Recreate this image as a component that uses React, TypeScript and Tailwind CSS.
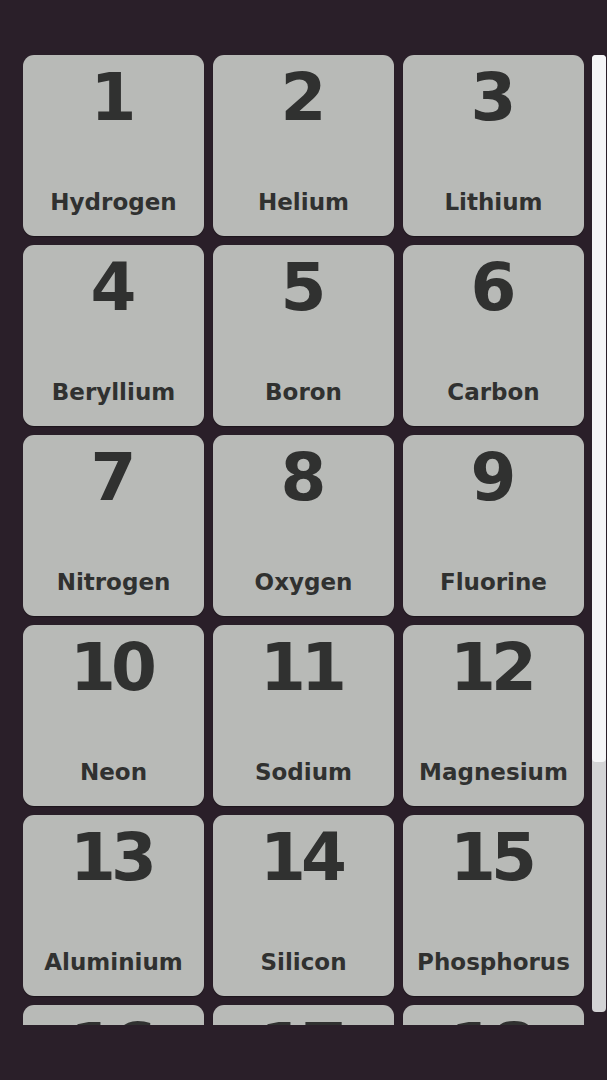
import React from "react";

const elements = [
  "Hydrogen", "Helium", "Lithium", "Beryllium", "Boron", "Carbon",
  "Nitrogen", "Oxygen", "Fluorine", "Neon", "Sodium", "Magnesium",
  "Aluminium", "Silicon", "Phosphorus", "Sulfur", "Chlorine", "Argon",
];

export default function App() {
  return (
    <div
      className="w-[607px] h-[1080px] bg-[#2a1f29] overflow-hidden"
      style={{ fontFamily: '"DejaVu Sans", "Liberation Sans", sans-serif' }}
    >
      <div className="flex pt-[55px] pl-[23px]">
        <div className="h-[970px] overflow-hidden">
          <div className="grid grid-cols-[181px_181px_181px] gap-[9px]">
            {elements.map((name, i) => (
              <div
                key={name}
                className="h-[181px] rounded-[11px] bg-[#b8bab7] shadow-[0_1px_1px_rgba(0,0,0,0.35)] flex flex-col items-center justify-between pt-[10px] pb-[22px] text-[#303130]"
              >
                <div className="text-[66px] leading-none font-bold tracking-[-5px] pr-[5px]">
                  {i + 1}
                </div>
                <div className="text-[23px] leading-none font-bold">{name}</div>
              </div>
            ))}
          </div>
        </div>
        <div className="ml-[8px] w-[14px] h-[957px] rounded-[4px] bg-[#d3d3d5] flex flex-col">
          <div className="h-[707px] rounded-[4px] bg-[#f5f5f7]" />
        </div>
      </div>
    </div>
  );
}
